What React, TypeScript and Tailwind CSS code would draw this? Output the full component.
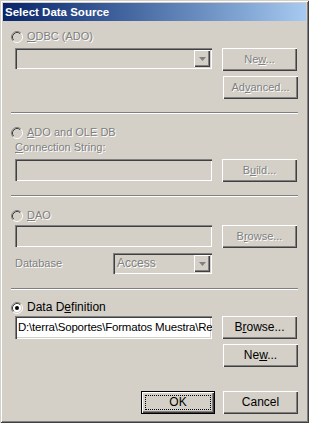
import React from 'react';

const raised = 'shadow-[inset_1px_1px_0_#fff,inset_-1px_-1px_0_#404040,inset_-2px_-2px_0_#808080]';
const sunken = 'shadow-[inset_1px_1px_0_#808080,inset_2px_2px_0_#404040,inset_-1px_-1px_0_#fff,inset_-2px_-2px_0_#d4d0c8]';
const grayText = 'text-[#808080] [text-shadow:1px_1px_0_#fff]';

function Radio({ checked }: { checked?: boolean }) {
  return (
    <svg width="12" height="12" viewBox="0 0 12 12" className="shrink-0">
      <circle cx="6" cy="6" r="4.5" fill={checked ? '#fff' : '#d4d0c8'} />
      <path d="M2.11 9.89 A5.5 5.5 0 0 1 9.89 2.11" stroke="#808080" fill="none" />
      <path d="M9.89 2.11 A5.5 5.5 0 0 1 2.11 9.89" stroke="#fff" fill="none" />
      <path d="M2.82 9.18 A4.5 4.5 0 0 1 9.18 2.82" stroke="#404040" fill="none" />
      <path d="M9.18 2.82 A4.5 4.5 0 0 1 2.82 9.18" stroke="#d4d0c8" fill="none" />
      {checked && <circle cx="6" cy="6" r="2" fill="#000" />}
    </svg>
  );
}

function Btn({ children, disabled, className = '' }: { children: React.ReactNode; disabled?: boolean; className?: string }) {
  return (
    <div className={`flex items-center justify-center w-[75px] h-[23px] shrink-0 ${raised} ${disabled ? grayText : 'text-black'} ${className}`}>
      <span>{children}</span>
    </div>
  );
}

function Arrow({ disabled }: { disabled?: boolean }) {
  return (
    <div className={`absolute right-[2px] top-[2px] w-[16px] h-[17px] bg-[#d4d0c8] flex items-center justify-center ${raised}`}>
      <svg width="7" height="4" viewBox="0 0 7 4">
        <path d="M0 0h7L3.5 4z" fill={disabled ? '#808080' : '#000'} />
      </svg>
    </div>
  );
}

function Sep() {
  return <div className="h-[2px] border-t border-[#808080] border-b border-b-white" />;
}

function App() {
  return (
    <div className="w-[309px] h-[423px] bg-[#d4d0c8] p-[3px] text-[11px] leading-[13px] shadow-[inset_1px_1px_0_#d4d0c8,inset_-1px_-1px_0_#404040,inset_2px_2px_0_#fff,inset_-2px_-2px_0_#808080]" style={{ fontFamily: '"Liberation Sans", Arial, sans-serif' }}>
      {/* Title bar */}
      <div className="h-[18px] flex items-center pl-[2px] bg-gradient-to-r from-[#0a246a] to-[#a6caf0] text-white font-bold text-[11.5px]">
        <span>Select Data Source</span>
      </div>

      <div className="px-[8px]">
        {/* ODBC */}
        <div className="mt-[9px] h-[13px] flex items-center gap-[4px]">
          <Radio />
          <span className={grayText}><u className="underline-offset-1">O</u>DBC (ADO)</span>
        </div>
        <div className="mt-[5px] ml-[4px] flex gap-[10px]">
          <div className={`relative w-[197px] h-[21px] ${sunken}`}>
            <Arrow disabled />
          </div>
          <Btn disabled>Ne<u className="underline-offset-1">w</u>...</Btn>
        </div>
        <div className="mt-[5px] flex justify-end">
          <Btn disabled>Ad<u className="underline-offset-1">v</u>anced...</Btn>
        </div>

        <div className="mt-[13px]"><Sep /></div>

        {/* ADO and OLE DB */}
        <div className="mt-[12px] h-[13px] flex items-center gap-[4px]">
          <Radio />
          <span className={grayText}><u className="underline-offset-1">A</u>DO and OLE DB</span>
        </div>
        <div className={`mt-[2px] ml-[4px] h-[13px] ${grayText}`}>
          <u className="underline-offset-1">C</u>onnection String:
        </div>
        <div className="mt-[5px] ml-[4px] flex gap-[10px]">
          <div className={`w-[197px] h-[22px] ${sunken}`} />
          <Btn disabled>B<u className="underline-offset-1">u</u>ild...</Btn>
        </div>

        <div className="mt-[13px]"><Sep /></div>

        {/* DAO */}
        <div className="mt-[12px] h-[13px] flex items-center gap-[4px]">
          <Radio />
          <span className={grayText}><u className="underline-offset-1">D</u>AO</span>
        </div>
        <div className="mt-[3px] ml-[4px] flex gap-[10px]">
          <div className={`w-[197px] h-[22px] ${sunken}`} />
          <Btn disabled>B<u className="underline-offset-1">r</u>owse...</Btn>
        </div>
        <div className="mt-[5px] ml-[4px] flex items-center">
          <span className={`w-[98px] ${grayText}`}>Database</span>
          <div className={`relative w-[99px] h-[21px] flex items-center pl-[4px] ${sunken}`}>
            <span className={`text-[12px] ${grayText}`}>Access</span>
            <Arrow disabled />
          </div>
        </div>

        <div className="mt-[14px]"><Sep /></div>

        {/* Data Definition */}
        <div className="mt-[11px] h-[13px] flex items-center gap-[4px]">
          <Radio checked />
          <span className="text-black text-[12px]">Data D<u className="underline-offset-1">e</u>finition</span>
        </div>
        <div className="mt-[2px] ml-[4px] flex gap-[10px]">
          <div className={`w-[197px] h-[23px] bg-white flex items-center pl-[3px] overflow-hidden whitespace-nowrap text-[11.5px] tracking-[-0.2px] text-black ${sunken}`}>
            {'D:\\terra\\Soportes\\Formatos Muestra\\Re'}
          </div>
          <Btn className="text-[12px]">B<u className="underline-offset-1">r</u>owse...</Btn>
        </div>
        <div className="mt-[5px] flex justify-end">
          <Btn className="text-[12px]">Ne<u className="underline-offset-1">w</u>...</Btn>
        </div>

        {/* OK / Cancel */}
        <div className="mt-[24px] ml-[130px] flex gap-[8px] text-[12px]">
          <div className="relative flex items-center justify-center w-[75px] h-[23px] shadow-[inset_0_0_0_1px_#000,inset_2px_2px_0_#fff,inset_-2px_-2px_0_#404040,inset_-3px_-3px_0_#808080]">
            OK
            <span className="absolute inset-[4px] border border-dotted border-black" />
          </div>
          <Btn>Cancel</Btn>
        </div>
      </div>
    </div>
  );
}

export default App;
